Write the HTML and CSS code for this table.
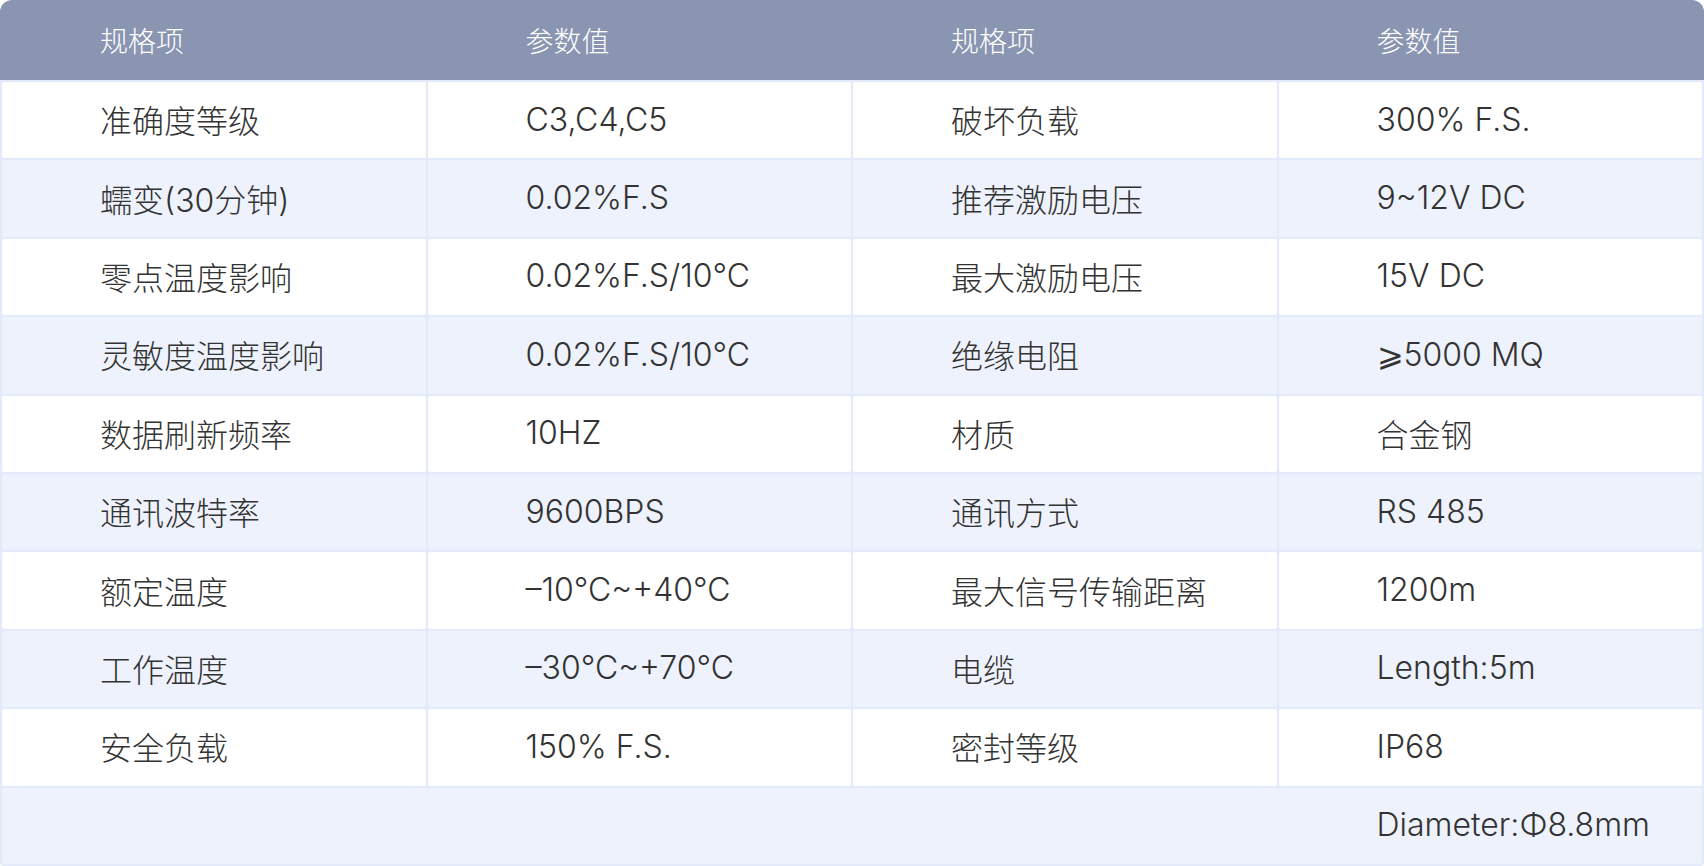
FILE: index.html
```html
<!DOCTYPE html>
<html lang="zh-CN">
<head>
<meta charset="utf-8">
<title>规格参数</title>
<link rel="stylesheet" href="styles.css">
</head>
<body>
<div class="spec">
  <div class="th">规格项</div>
  <div class="th">参数值</div>
  <div class="th">规格项</div>
  <div class="th">参数值</div>

  <div class="td">准确度等级</div><div class="td">C3,C4,C5</div><div class="td">破坏负载</div><div class="td">300% F.S.</div>
  <div class="td alt">蠕变(30分钟)</div><div class="td alt">0.02%F.S</div><div class="td alt">推荐激励电压</div><div class="td alt">9~12V DC</div>
  <div class="td">零点温度影响</div><div class="td">0.02%F.S/10℃</div><div class="td">最大激励电压</div><div class="td">15V DC</div>
  <div class="td alt">灵敏度温度影响</div><div class="td alt">0.02%F.S/10℃</div><div class="td alt">绝缘电阻</div><div class="td alt">⩾5000 MQ</div>
  <div class="td">数据刷新频率</div><div class="td">10HZ</div><div class="td">材质</div><div class="td">合金钢</div>
  <div class="td alt">通讯波特率</div><div class="td alt">9600BPS</div><div class="td alt">通讯方式</div><div class="td alt">RS 485</div>
  <div class="td">额定温度</div><div class="td">–10℃~+40℃</div><div class="td">最大信号传输距离</div><div class="td">1200m</div>
  <div class="td alt">工作温度</div><div class="td alt">–30℃~+70℃</div><div class="td alt">电缆</div><div class="td alt">Length:5m</div>
  <div class="td">安全负载</div><div class="td">150% F.S.</div><div class="td">密封等级</div><div class="td">IP68</div>
  <div class="td alt wide"><span class="last">Diameter:Φ8.8mm</span></div>
</div>
</body>
</html>
```

FILE: styles.css
```css
html, body {
  margin: 0;
  padding: 0;
  background: #ffffff;
}

.spec {
  box-sizing: border-box;
  width: 1704px;
  height: 866px;
  display: grid;
  grid-template-columns: repeat(4, 1fr);
  grid-template-rows: 80px repeat(10, 1fr);
  column-gap: 2px;
  row-gap: 2px;
  padding: 0 2px 2px;
  background: linear-gradient(#8a95b2 0, #8a95b2 80px, #e3ebfa 80px);
  border-radius: 12px 12px 4px 4px;
  overflow: hidden;
  font-family: Inter, "Noto Sans CJK SC", sans-serif;
  font-weight: 300;
}

.th {
  display: flex;
  align-items: center;
  padding-left: 98px;
  color: #ffffff;
  font-size: 28px;
}

.td {
  display: flex;
  align-items: center;
  padding-left: 98px;
  padding-bottom: 2px;
  background: #ffffff;
  color: #333333;
  font-size: 32px;
  border-radius: 2px;
}

.td.alt {
  background: #eef2fc;
}

.td.wide {
  grid-column: 1 / -1;
  display: grid;
  grid-template-columns: repeat(4, 1fr);
  column-gap: 2px;
  padding-left: 0;
}

.last {
  grid-column: 4;
  padding-left: 98px;
}
```
